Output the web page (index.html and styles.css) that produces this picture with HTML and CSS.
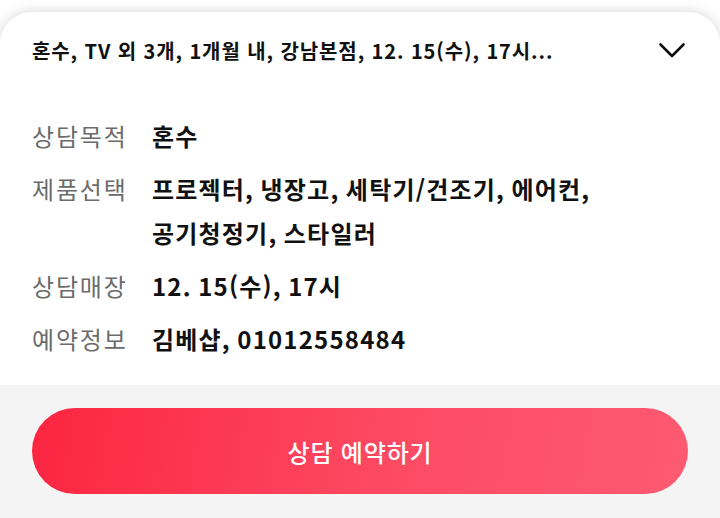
FILE: index.html
```html
<!DOCTYPE html>
<html lang="ko">
<head>
<meta charset="utf-8">
<link rel="stylesheet" href="styles.css">
</head>
<body>
<div class="sheet">
  <div class="summary">
    <span class="summary-text">혼수, TV 외 3개, 1개월 내, 강남본점, 12. 15(수), 17시...</span>
    <svg class="chevron" width="28" height="28" viewBox="0 0 28 28"><path d="M2.5 8.5 L14 20 L25.5 8.5" fill="none" stroke="#111" stroke-width="2.6" stroke-linecap="round" stroke-linejoin="round"/></svg>
  </div>
  <dl class="details">
    <div class="row"><dt>상담목적</dt><dd>혼수</dd></div>
    <div class="row"><dt>제품선택</dt><dd>프로젝터, 냉장고, 세탁기/건조기, 에어컨, 공기청정기, 스타일러</dd></div>
    <div class="row"><dt>상담매장</dt><dd>12. 15(수), 17시</dd></div>
    <div class="row"><dt>예약정보</dt><dd>김베샵, 01012558484</dd></div>
  </dl>
  <div class="footer">
    <button class="cta">상담 예약하기</button>
  </div>
</div>
</body>
</html>
```
FILE: styles.css
```css
html, body {
  margin: 0;
  padding: 0;
  background: #ffffff;
  font-family: "Noto Sans CJK KR", "Noto Sans", sans-serif;
}
body {
  padding-top: 12px;
  overflow: hidden;
}
.sheet {
  background: #fff;
  border-radius: 32px 32px 0 0;
  box-shadow: 0 0 14px rgba(0, 0, 0, 0.16);
}
.summary {
  height: 76px;
  padding: 0 32px;
  display: flex;
  align-items: center;
  justify-content: space-between;
}
.summary-text {
  font-size: 20px;
  font-weight: 700;
  color: #111;
  letter-spacing: 0.9px;
}
.chevron {
  display: block;
  margin-right: 2px;
}
.details {
  margin: 0;
  padding: 26px 32px 24px 32px;
  display: flex;
  flex-direction: column;
  gap: 9px;
}
.row {
  display: flex;
  line-height: 44px;
  font-size: 24px;
}
.row dt {
  width: 120px;
  flex: none;
  color: #6b6b6b;
  font-weight: 400;
  letter-spacing: 1.8px;
}
.row dd {
  margin: 0;
  color: #111;
  font-weight: 700;
  letter-spacing: 1.2px;
  word-spacing: -1.5px;
  word-break: keep-all;
}
.footer {
  background: #f4f4f4;
  padding: 23px 32px 30px;
}
.cta {
  display: block;
  width: 100%;
  height: 86px;
  border: none;
  border-radius: 43px;
  background: linear-gradient(100deg, #fc2540 0%, #fd4a63 55%, #fd5a72 100%);
  color: #fff;
  font-family: "Noto Sans CJK KR", "Noto Sans", sans-serif;
  font-size: 24px;
  font-weight: 500;
  letter-spacing: 0.8px;
}
```
